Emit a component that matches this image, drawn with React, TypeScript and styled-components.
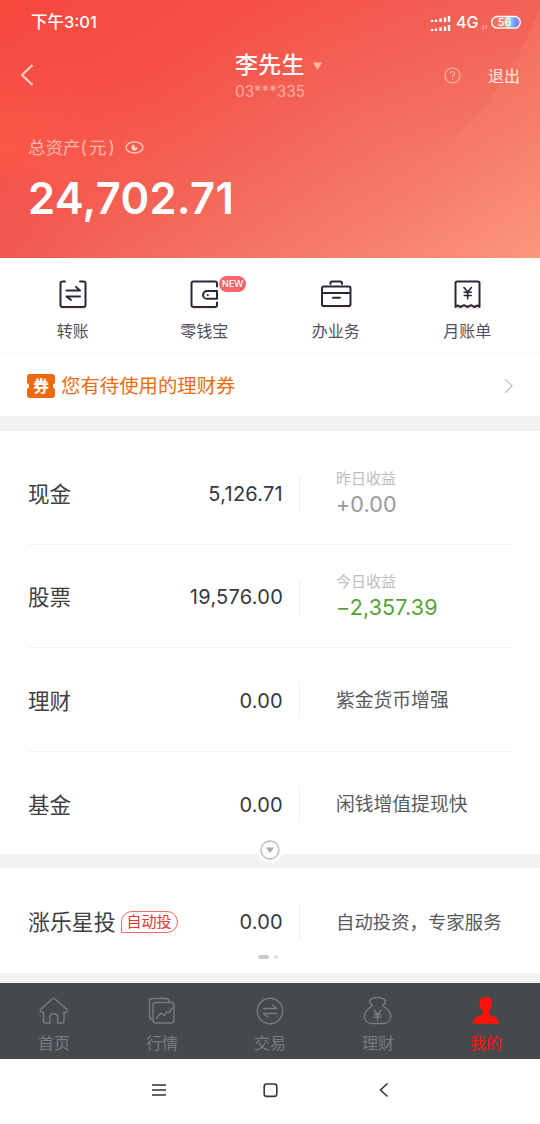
import React from "react";
import styled, { createGlobalStyle } from "styled-components";

const Global = createGlobalStyle`
  * { box-sizing: border-box; }
  body { margin: 0; background: #fff; font-family: Inter, "Noto Sans CJK SC", sans-serif; }
  svg { display: block; flex: none; }
`;

const Screen = styled.div`
  width: 540px;
  height: 1124px;
  display: flex;
  flex-direction: column;
  overflow: hidden;
  background: #fff;
`;

const Header = styled.header`
  position: relative;
  isolation: isolate;
  height: 258px;
  flex: none;
  overflow: hidden;
  color: #fff;
  background: linear-gradient(147deg, #f5483f 0%, #f65047 28%, #f36557 52%, #f67a66 74%, #fb977b 100%);
`;

const Backdrop = styled.svg`
  position: absolute;
  inset: 0;
  z-index: -1;
`;

const StatusBar = styled.div`
  height: 44px;
  padding: 1px 15px 0 31px;
  display: flex;
  align-items: center;
  justify-content: space-between;
`;

const Txt = styled.span<{ $size: number; $color?: string; $weight?: number; $gap?: number; $drop?: number }>`
  display: block;
  white-space: nowrap;
  line-height: 1;
  padding-top: ${(p) => p.$drop ?? 0}px;
  font-size: ${(p) => p.$size}px;
  color: ${(p) => p.$color ?? "inherit"};
  font-weight: ${(p) => p.$weight ?? 400};
  letter-spacing: ${(p) => p.$gap ?? 0}px;
`;

const TitleBar = styled.div`
  height: 62px;
  padding: 0 20px;
  display: grid;
  grid-template-columns: 1fr auto 1fr;
  align-items: center;
`;

const Account = styled.div`
  width: 70px;
  display: flex;
  flex-direction: column;
  gap: 7px;
  margin-top: 3px;
`;

const AccountName = styled.div`
  display: flex;
  align-items: center;
  gap: 8px;
`;

const TitleActions = styled.div`
  display: flex;
  align-items: center;
  justify-content: flex-end;
  gap: 27px;
`;

const Assets = styled.div`
  padding: 31px 28px 0;
`;

const AssetsLabel = styled.div`
  display: flex;
  align-items: center;
  height: 20px;
  & > svg { margin-left: 8px; }
`;

const Total = styled.div`
  margin-top: 16px;
  font-weight: 600;
  font-size: 43.5px;
  line-height: 50px;
  letter-spacing: 0.3px;
`;

const Actions = styled.nav`
  height: 96px;
  flex: none;
  padding: 20px 7px 0;
  display: grid;
  grid-template-columns: repeat(4, 1fr);
  border-bottom: 1px solid #f5f5f5;
`;

const Action = styled.div`
  display: flex;
  flex-direction: column;
  align-items: center;
  gap: 13px;
`;

const ActionIcon = styled.div`
  position: relative;
  color: #292938;
`;

const NewBadge = styled.span`
  position: absolute;
  left: 31px;
  top: -2px;
  width: 27px;
  height: 16px;
  border-radius: 8px;
  background: #f8646a;
  color: #fff;
  font-size: 9px;
  font-weight: 500;
  line-height: 16px;
  text-align: center;
`;

const Coupon = styled.div`
  height: 62px;
  flex: none;
  padding: 1px 26px 0 27px;
  display: flex;
  align-items: center;
  gap: 6px;
  & > :last-child { margin-left: auto; }
`;

const Ticket = styled.div`
  position: relative;
  width: 28px;
  height: 24px;
  border-radius: 3px;
  background: #f0690f;
  color: #fff;
  display: grid;
  place-items: center;
  &::before, &::after {
    content: "";
    position: absolute;
    top: 9px;
    width: 6px;
    height: 6px;
    border-radius: 50%;
    background: #fff;
  }
  &::before { left: -4px; }
  &::after { right: -4px; }
`;

const Gap = styled.div<{ $h: number }>`
  position: relative;
  height: ${(p) => p.$h}px;
  flex: none;
  background: #f2f2f2;
`;

const Expander = styled.div`
  position: absolute;
  left: 257px;
  top: -17px;
  width: 26px;
  height: 26px;
  border-radius: 50%;
  background: #fff;
  display: grid;
  place-items: center;
`;

const Holdings = styled.section`
  height: 423px;
  flex: none;
  padding: 10px 28px 0;
`;

const Row = styled.div<{ $last?: boolean }>`
  height: 103.5px;
  padding-top: 2px;
  display: grid;
  grid-template-columns: 255px 53px 1fr;
  align-items: center;
  border-bottom: ${(p) => (p.$last ? "none" : "1px solid #f3f3f3")};
`;

const RowHead = styled.div`
  display: flex;
  align-items: center;
  justify-content: space-between;
`;

const RowName = styled.div`
  display: flex;
  align-items: center;
  gap: 5px;
`;

const Divider = styled.i`
  width: 1px;
  height: 36px;
  margin-left: 16px;
  background: #ededed;
`;

const Profit = styled.div`
  display: flex;
  flex-direction: column;
  gap: 8px;
  padding-bottom: 1px;
`;

const AutoTag = styled.span`
  width: 57px;
  height: 22px;
  border: 1px solid #ea6a60;
  border-radius: 11px 11px 11px 0;
  color: #e8392e;
  font-size: 15px;
  line-height: 20px;
  text-align: center;
`;

const StarInvest = styled.section`
  height: 105px;
  flex: none;
  padding: 1px 28px 0;
`;

const Pager = styled.div`
  height: 4px;
  margin-top: -18px;
  display: flex;
  justify-content: center;
  gap: 5px;
  padding-right: 4px;
`;

const Dot = styled.i<{ $on?: boolean }>`
  width: ${(p) => (p.$on ? 11 : 4)}px;
  height: 4px;
  border-radius: 2px;
  background: ${(p) => (p.$on ? "#cacaca" : "#dedede")};
`;

const TabBar = styled.nav`
  height: 76px;
  flex: none;
  background: #46494c;
  display: grid;
  grid-template-columns: repeat(5, 1fr);
`;

const Tab = styled.div<{ $on?: boolean }>`
  display: flex;
  flex-direction: column;
  align-items: center;
  padding-top: 12px;
  gap: 8px;
  color: ${(p) => (p.$on ? "#ff120c" : "#777b86")};
`;

const SystemNav = styled.div`
  height: 65px;
  flex: none;
  padding: 0 142px 3px 144px;
  display: flex;
  align-items: center;
  justify-content: space-between;
`;

type IconProps = { children: React.ReactNode; stroke?: number };
const Icon = ({ children, stroke = 2 }: IconProps) => (
  <svg width="32" height="32" viewBox="0 0 32 32" fill="none" stroke="currentColor" strokeWidth={stroke} strokeLinecap="round" strokeLinejoin="round">
    {children}
  </svg>
);

const actions = [
  {
    label: "转账",
    art: (
      <>
        <path stroke="#fbe3e6" d="M6 30.500h21" />
        <path d="M8 3.500H5.500q-2 0-2 2v21.500q0 2 2 2h21q2 0 2-2V5.500q0-2-2-2H23" />
        <path d="M9.500 12.500h13.500l-4-3.500M23 18.500H9.500l4.500 3.500" />
      </>
    ),
  },
  {
    label: "零钱宝",
    isNew: true,
    art: (
      <>
        <path stroke="#fbe3e6" d="M6 30.500h21" />
        <path d="M29 8.500V5.500q0-2-2-2H5.500q-2 0-2 2v21.500q0 2 2 2H27q2 0 2-2v-2.500" />
        <path d="M29 13h-10a3.900 3.900 0 0 0 0 7.800H29z" />
        <path strokeWidth="2" d="M19.800 16.900h.1" />
      </>
    ),
  },
  {
    label: "办业务",
    art: (
      <>
        <path stroke="#fbe3e6" d="M4 29.500h25" />
        <rect x="2" y="8.500" width="28.500" height="19.500" rx="1.800" />
        <path d="M10.500 6V5q0-1.500 1.500-1.500h8.500Q22 3.500 22 5v1M2 15h28M13 19.800h7" />
      </>
    ),
  },
  {
    label: "月账单",
    art: (
      <>
        <path stroke="#fbe3e6" d="M6 30.500h21" />
        <path d="M4.500 29V5q0-1.500 1.500-1.500h21q1.500 0 1.500 1.500v24l-2-1.500-3 1.500-3.500-1.800-3.500 1.800-3.500-1.800-3.500 1.800-3-1.500z" />
        <path strokeWidth="1.600" d="M13 9.500l3.700 4.500 3.700-4.500M16.700 14v6.700M13.200 14.300h7M13.200 17.500h7" />
      </>
    ),
  },
];

const tabs = [
  {
    label: "首页",
    art: <path d="M14 4q1.500-1.200 3 0L29 14.500q1 2.500-1.500 3H26V26q0 2-2 2h-4.200v-6q0-3-3-3H15q-3 0-3 3v6H7.500q-2 0-2-2v-8.500H4q-2.500-.5-1.500-3z" />,
  },
  {
    label: "行情",
    art: (
      <>
        <rect x="7" y="7.500" width="21" height="20.500" rx="3" />
        <path d="M6.500 24.500q-3 0-3-3V6q0-2.500 2.500-2.500h14q3 0 3 3.500M10.500 23l4.500-5 3.500 2.500 2-3.500 2.500.500 3-4.500" />
      </>
    ),
  },
  {
    label: "交易",
    art: (
      <>
        <circle cx="16" cy="16" r="12.700" />
        <path d="M9.500 13.500H23l-4.500-3.500M23 18.500H9.500l4.500 3.500" />
      </>
    ),
  },
  {
    label: "理财",
    art: (
      <>
        <path d="M10.500 10.500Q6.500 7.500 8 5.200 9.500 2.800 12.500 3q3-1.200 6 0 3-.2 4.500 2.200 1.500 2.300-2.500 5.300 8.500 5.500 8.200 11.500-.7 6.500-8.700 6.500h-9Q3 28.500 2.500 22q-.2-6 8-11.500z" />
        <path d="m12 15 3.500 4.500L19 15M15.500 19.500V25.500M12.200 19.500h6.600M12.200 22.300h6.600" />
      </>
    ),
  },
  {
    label: "我的",
    on: true,
    art: (
      <path
        fill="currentColor"
        stroke="none"
        d="M12 2.500q3.500-1.200 7.500 0 2.700 1.500 2.400 5.500.2 3.500-1.900 6-1.500 2.500-1.200 4.500.7 2 5.200 3 4.300 1 4.500 7.200h-25.500q.2-6.200 4.500-7.200 4.500-1 5.200-3 .3-2-1.200-4.500Q9.400 11.500 9.600 8q-.3-4 2.400-5.500z"
      />
    ),
  },
];

const holdings = [
  { name: "现金", value: "5,126.71", label: "昨日收益", profit: "+0.00", color: "#999" },
  { name: "股票", value: "19,576.00", label: "今日收益", profit: "−2,357.39", color: "#58a136" },
  { name: "理财", value: "0.00", note: "紫金货币增强" },
  { name: "基金", value: "0.00", note: "闲钱增值提现快" },
];

const Amount = ({ children }: { children: string }) => (
  <Txt $size={20} $color="#38383a" $gap={0.25} $drop={1}>{children}</Txt>
);

export default function App() {
  return (
    <Screen>
      <Global />
      <Header>
        <Backdrop width="540" height="258" viewBox="0 0 540 258">
          <defs>
            <linearGradient id="disc" x1="0.500" y1="1" x2="0.950" y2="0.500">
              <stop offset="0" stopColor="#ee4543" stopOpacity="0" />
              <stop offset="0.400" stopColor="#ee4543" stopOpacity="0" />
              <stop offset="1" stopColor="#ee4543" stopOpacity="0.340" />
            </linearGradient>
            <radialGradient id="glow">
              <stop offset="0" stopColor="#ff6450" stopOpacity="0.400" />
              <stop offset="0.500" stopColor="#ff6450" stopOpacity="0.200" />
              <stop offset="1" stopColor="#ff6450" stopOpacity="0" />
            </radialGradient>
            <linearGradient id="low" x1="0" y1="0" x2="1" y2="0">
              <stop offset="0" stopColor="#ea5350" stopOpacity="0.350" />
              <stop offset="1" stopColor="#ea5350" stopOpacity="0" />
            </linearGradient>
          </defs>
          <circle cx="210" cy="-115" r="352" fill="url(#disc)" />
          <ellipse cx="5" cy="145" rx="170" ry="90" fill="url(#glow)" />
          <path d="M0 174q40 16 110 14v70H0z" fill="url(#low)" />
        </Backdrop>
        <StatusBar>
          <Txt $size={16.500} $weight={500}>下午3:01</Txt>
          <svg width="96" height="18" viewBox="0 0 96 18">
            <path
              d="M3 8V6M7 8V5.500M11.500 8V4.500M16 8V3.500M20 8V2M3 17v-2M7 17v-2.500M11.500 17v-3.500M16 17v-4.500M20 17v-6"
              stroke="#fff"
              strokeWidth="2.400"
            />
            <text x="27" y="14" fill="#fff" fontSize="16" fontWeight="500" fontFamily="Inter">4G</text>
            <path d="M54 11v5M57 11v4" stroke="#fff" strokeOpacity=".5" />
            <defs>
              <linearGradient id="charge">
                <stop offset="0" stopColor="#fff" stopOpacity="0" />
                <stop offset=".4" stopColor="#f8bb88" stopOpacity=".3" />
                <stop offset=".6" stopColor="#92ead9" />
                <stop offset=".8" stopColor="#7895ff" />
                <stop offset="1" stopColor="#7772ff" />
              </linearGradient>
            </defs>
            <rect x="62.700" y="2.500" width="28.600" height="11.600" rx="5.800" fill="url(#charge)" stroke="#fff" strokeWidth="1.400" />
            <text x="75.500" y="12.100" fill="#fff" fontSize="10.500" fontWeight="500" fontFamily="Inter" textAnchor="middle">56</text>
          </svg>
        </StatusBar>
        <TitleBar>
          <svg width="14" height="22" viewBox="0 0 14 22" fill="none" stroke="#ffd3cb" strokeWidth="2">
            <path d="M12.500 1 2 11l10.500 10" />
          </svg>
          <Account>
            <AccountName>
              <Txt $size={23} $weight={500} $gap={0.3}>李先生</Txt>
              <svg width="9" height="10" viewBox="0 0 9 10" fill="#ffb6ad"><path d="M0 2.500h9L4.500 10z" /></svg>
            </AccountName>
            <Txt $size={15.300} $color="#fbaaa2">03***335</Txt>
          </Account>
          <TitleActions>
            <svg width="17" height="17" viewBox="0 0 17 17" fill="none" stroke="#fcb0a7" strokeWidth="1.200">
              <circle cx="8.500" cy="8.500" r="7.500" />
              <path d="M6.300 7q0-2.500 2.200-2.500T10.700 6.700Q10.700 8 8.600 9v1.300M8.600 11.500v1.400" />
            </svg>
            <Txt $size={16} $color="#ffe5df" $drop={1}>退出</Txt>
          </TitleActions>
        </TitleBar>
        <Assets>
          <AssetsLabel>
            <Txt $size={17.500} $color="#ffb8ab" $drop={1}>总资产</Txt>
            <Txt $size={17.500} $color="#ffb8ab" $gap={2} $drop={1}>(元)</Txt>
            <svg width="19" height="13" viewBox="0 0 19 13" fill="none" stroke="#ffc4b8" strokeWidth="1.400">
              <ellipse cx="9.500" cy="6.500" rx="8.500" ry="5.500" />
              <path d="M9.500 3.500a3 3 0 1 0 3 3h-3z" fill="#ffd8cf" stroke="none" />
            </svg>
          </AssetsLabel>
          <Total>24,702.71</Total>
        </Assets>
      </Header>

      <Actions>
        {actions.map((a) => (
          <Action key={a.label}>
            <ActionIcon>
              <Icon>{a.art}</Icon>
              {a.isNew && <NewBadge>NEW</NewBadge>}
            </ActionIcon>
            <Txt $size={16} $color="#4e5260">{a.label}</Txt>
          </Action>
        ))}
      </Actions>

      <Coupon>
        <Ticket><Txt $size={16} $weight={700}>券</Txt></Ticket>
        <Txt $size={19.400} $color="#ee6b10" $drop={3}>您有待使用的理财券</Txt>
        <svg width="10" height="16" viewBox="0 0 10 16" fill="none" stroke="#c8c8c8" strokeWidth="1.500">
          <path d="m1 1 7 7-7 7" />
        </svg>
      </Coupon>
      <Gap $h={15} />

      <Holdings>
        {holdings.map((h, i) => (
          <Row key={h.name} $last={i === holdings.length - 1}>
            <RowHead>
              <Txt $size={21.500} $color="#404042" $drop={2}>{h.name}</Txt>
              <Amount>{h.value}</Amount>
            </RowHead>
            <Divider />
            {h.note ? (
              <Txt $size={18.800} $color="#59595b" $drop={3}>{h.note}</Txt>
            ) : (
              <Profit>
                <Txt $size={15} $color="#bdbdbd">{h.label}</Txt>
                <Txt $size={21.500} $color={h.color} $gap={0.15}>{h.profit}</Txt>
              </Profit>
            )}
          </Row>
        ))}
      </Holdings>
      <Gap $h={14}>
        <Expander>
          <svg width="20" height="20" viewBox="0 0 20 20" fill="none" stroke="#b8b8b8" strokeWidth="1.300">
            <circle cx="10" cy="10" r="9" />
            <path d="M6 7.500h8L10 13z" fill="#aaa" stroke="none" />
          </svg>
        </Expander>
      </Gap>

      <StarInvest>
        <Row $last>
          <RowHead>
            <RowName>
              <Txt $size={21.900} $color="#404042" $drop={2}>涨乐星投</Txt>
              <AutoTag>自动投</AutoTag>
            </RowName>
            <Amount>0.00</Amount>
          </RowHead>
          <Divider />
          <Txt $size={18.400} $color="#59595b">自动投资，专家服务</Txt>
        </Row>
        <Pager><Dot $on /><Dot /></Pager>
      </StarInvest>
      <Gap $h={10} />

      <TabBar>
        {tabs.map((t) => (
          <Tab key={t.label} $on={t.on}>
            <Icon stroke={1.400}>{t.art}</Icon>
            <Txt $size={16}>{t.label}</Txt>
          </Tab>
        ))}
      </TabBar>

      <SystemNav>
        <svg width="29" height="16" viewBox="0 0 29 16" stroke="#30363a" strokeWidth="1.600">
          <path d="M8 3h14M8 8h14M8 13h14" />
        </svg>
        <svg width="16" height="16" viewBox="0 0 16 16" fill="none" stroke="#30363a" strokeWidth="1.600">
          <rect x="1.200" y="2" width="12.600" height="12.400" rx="2.500" />
        </svg>
        <svg width="29" height="16" viewBox="0 0 29 16" fill="none" stroke="#30363a" strokeWidth="1.600">
          <path d="M18.500 1.500 11.500 8l7 6.500" />
        </svg>
      </SystemNav>
    </Screen>
  );
}
